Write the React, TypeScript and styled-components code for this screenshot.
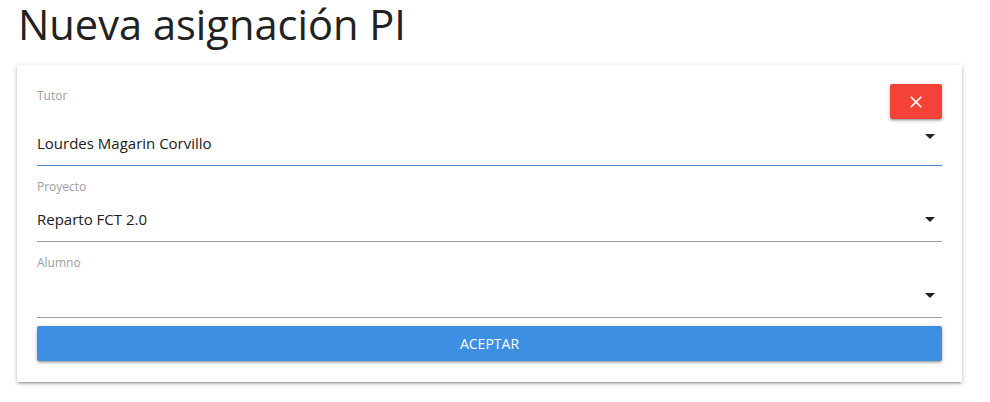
import React from "react";
import styled, { createGlobalStyle } from "styled-components";

const Global = createGlobalStyle`
  html, body { margin: 0; padding: 0; background: #fff; }
  body { font-family: "Open Sans", "Noto Sans", sans-serif; color: #212121; }
  * { box-sizing: border-box; }
`;

const Page = styled.div`
  display: flex;
  flex-direction: column;
  width: 990px;
  height: 402px;
  padding-top: 1px;
  overflow: hidden;
`;

const Title = styled.h1`
  margin: 0 0 0 18px;
  font-size: 41.6px;
  line-height: 46px;
  font-weight: 400;
  color: #212121;
  letter-spacing: 0;
`;

const Card = styled.div`
  margin: 18px 0 0 17px;
  width: 945px;
  height: 317px;
  background: #fff;
  padding: 19px 20px 20px;
  display: flex;
  flex-direction: column;
  box-shadow: 0 2px 2px 0 rgba(0, 0, 0, 0.14), 0 3px 1px -2px rgba(0, 0, 0, 0.12),
    0 1px 5px 0 rgba(0, 0, 0, 0.2);
`;

const Field = styled.div<{ $first?: boolean }>`
  display: flex;
  flex-direction: column;
  margin-top: ${(p) => (p.$first ? 0 : 13)}px;
`;

const FieldHeader = styled.div`
  display: flex;
  justify-content: space-between;
  align-items: flex-start;
  height: 35px;
`;

const Label = styled.label<{ $inset?: boolean }>`
  display: block;
  font-size: 12px;
  line-height: 16px;
  color: #9e9e9e;
  padding-top: ${(p) => (p.$inset ? 4 : 0)}px;
`;

const SelectRow = styled.div<{ $focused?: boolean }>`
  position: relative;
  display: flex;
  align-items: center;
  height: 47px;
  padding-top: 14px;
  padding-bottom: 12px;
  border-bottom: 1px solid ${(p) => (p.$focused ? "#4a88d0" : "#9e9e9e")};
`;

const Value = styled.span`
  flex: 1;
  font-size: 15px;
  line-height: 20px;
  color: #212121;
`;

const Arrow = styled.span<{ $shift?: number }>`
  width: 0;
  height: 0;
  margin-right: 7px;
  border-left: 5px solid transparent;
  border-right: 5px solid transparent;
  border-top: 5px solid #212121;
  transform: translateY(${(p) => p.$shift ?? 0}px);
`;

const CloseButton = styled.button`
  width: 52px;
  height: 35px;
  border: none;
  border-radius: 2px;
  background: #f44336;
  display: flex;
  align-items: center;
  justify-content: center;
  padding: 0;
  cursor: pointer;
  box-shadow: 0 2px 2px 0 rgba(0, 0, 0, 0.14), 0 3px 1px -2px rgba(0, 0, 0, 0.12),
    0 1px 5px 0 rgba(0, 0, 0, 0.2);
`;

const SubmitButton = styled.button`
  margin-top: 8px;
  height: 35px;
  width: 100%;
  border: none;
  border-radius: 2px;
  background: #3d8fe3;
  color: #fff;
  font-family: "Open Sans", "Noto Sans", sans-serif;
  font-size: 14px;
  text-transform: uppercase;
  cursor: pointer;
  box-shadow: 0 2px 2px 0 rgba(0, 0, 0, 0.14), 0 3px 1px -2px rgba(0, 0, 0, 0.12),
    0 1px 5px 0 rgba(0, 0, 0, 0.2);
`;

const CloseIcon = () => (
  <svg width="20" height="20" viewBox="0 0 24 24" fill="#fff">
    <path d="M19 6.41L17.59 5 12 10.59 6.41 5 5 6.41 10.59 12 5 17.59 6.41 19 12 13.41 17.59 19 19 17.59 13.41 12z" />
  </svg>
);

export default function App() {
  return (
    <Page>
      <Global />
      <Title>Nueva asignación PI</Title>
      <Card>
        <Field $first>
          <FieldHeader>
            <Label $inset>Tutor</Label>
            <CloseButton aria-label="Cerrar">
              <CloseIcon />
            </CloseButton>
          </FieldHeader>
          <SelectRow $focused>
            <Value>Lourdes Magarin Corvillo</Value>
            <Arrow $shift={-7} />
          </SelectRow>
        </Field>
        <Field>
          <Label>Proyecto</Label>
          <SelectRow>
            <Value>Reparto FCT 2.0</Value>
            <Arrow />
          </SelectRow>
        </Field>
        <Field>
          <Label>Alumno</Label>
          <SelectRow>
            <Value />
            <Arrow />
          </SelectRow>
        </Field>
        <SubmitButton>Aceptar</SubmitButton>
      </Card>
    </Page>
  );
}
